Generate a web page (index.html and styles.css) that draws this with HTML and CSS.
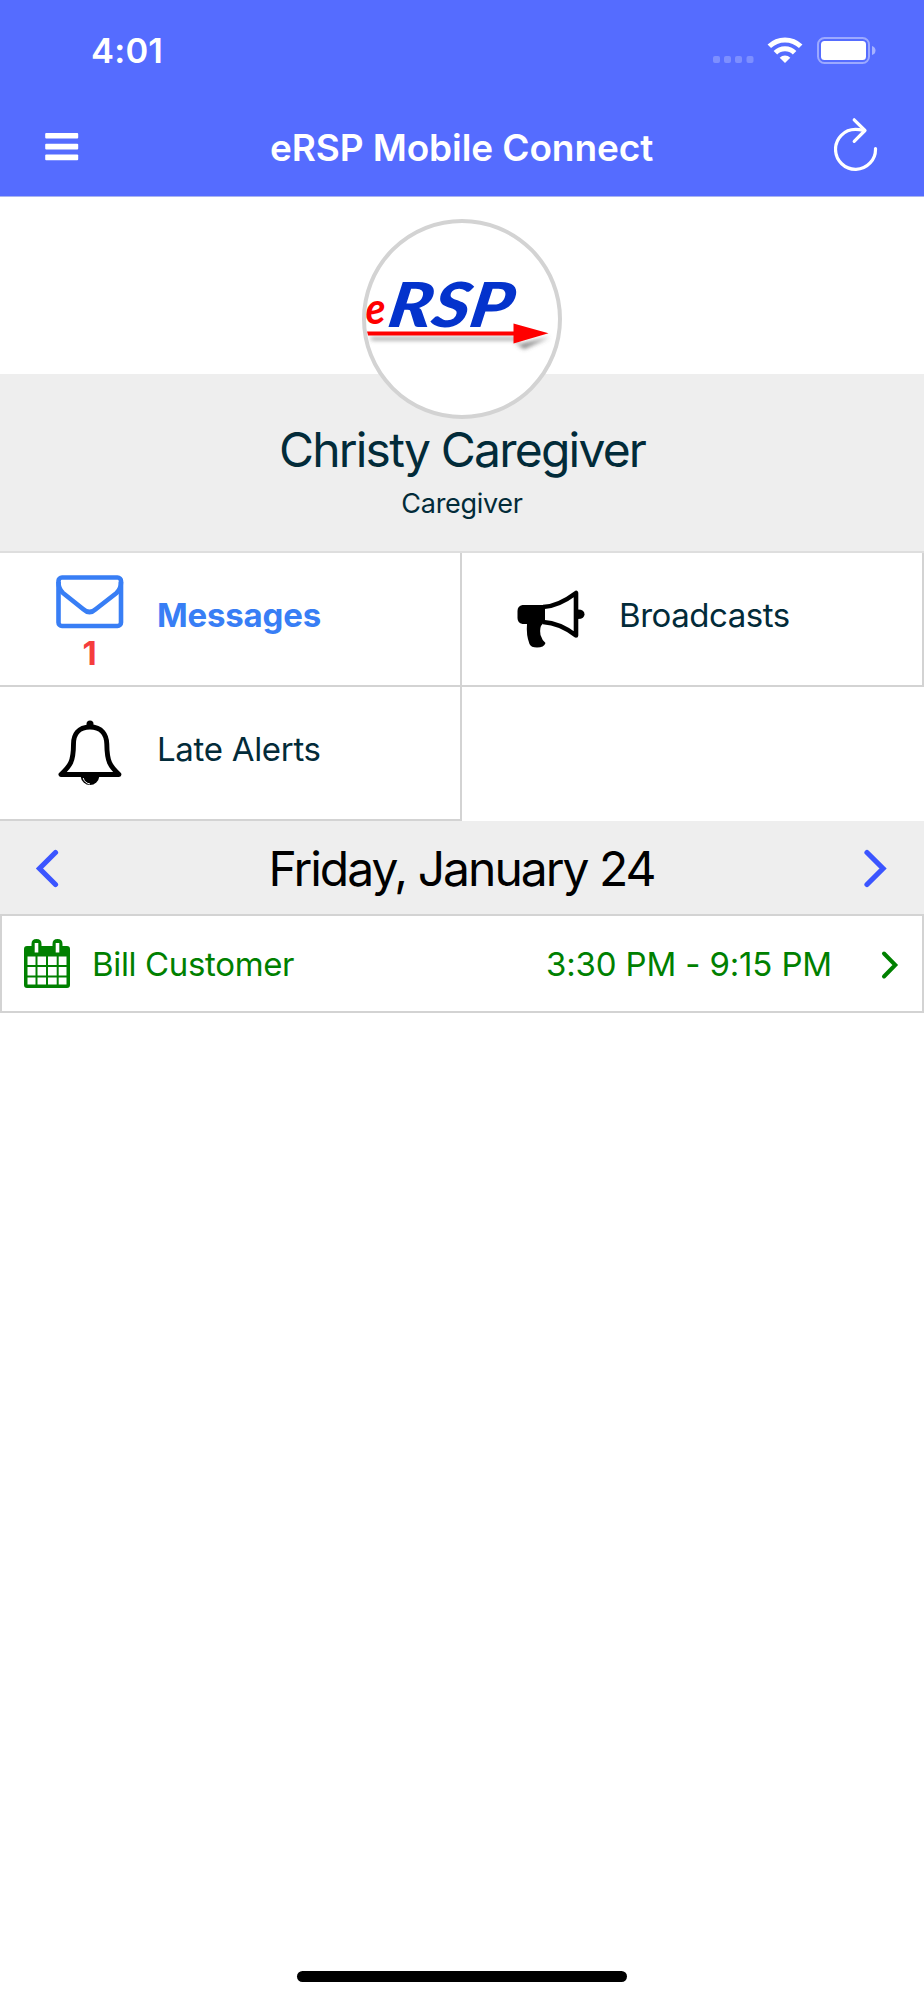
FILE: index.html
```html
<!DOCTYPE html>
<html lang="en">
<head>
<meta charset="utf-8">
<title>eRSP Mobile Connect</title>
<link rel="stylesheet" href="styles.css">
</head>
<body>
<div class="screen">
  <header class="header">
    <div class="status">
      <span class="clock">4:01</span>
      <svg class="status-icons" width="166" height="32" viewBox="0 0 166 32">
        <g fill="#fff" fill-opacity=".24">
          <rect x="1" y="21" width="7" height="7" rx="2"/>
          <rect x="12" y="21" width="7" height="7" rx="2"/>
          <rect x="23" y="21" width="7" height="7" rx="2"/>
          <rect x="34.500" y="21" width="7" height="7" rx="2"/>
        </g>
        <g fill="none" stroke="#fff" stroke-width="5">
          <path d="M57.300 11.300A22.500 22.500 0 0 1 88.700 11.300"/>
          <path d="M63.400 17.700A13.500 13.500 0 0 1 82.600 17.700"/>
        </g>
        <path d="M73 28l-5.300-5.200a7.500 7.500 0 0 1 10.600 0z" fill="#fff"/>
        <rect x="106" y="3" width="51" height="25" rx="6.500" fill="none" stroke="#fff" stroke-opacity=".42" stroke-width="2"/>
        <rect x="109" y="6" width="45" height="19" rx="3.500" fill="#fff"/>
        <path d="M160 11q3.500 1 3.500 4.500T160 20z" fill="#fff" fill-opacity=".48"/>
      </svg>
    </div>
    <div class="navbar">
      <svg class="menu-icon" width="34" height="28" viewBox="0 0 34 28" fill="#fff">
        <rect x=".2" y="0" width="33" height="5.600" rx="1"/>
        <rect x=".2" y="10.800" width="33" height="5.600" rx="1"/>
        <rect x=".2" y="21.600" width="33" height="5.600" rx="1"/>
      </svg>
      <h1 class="title">eRSP Mobile Connect</h1>
      <svg class="refresh-icon" width="44" height="54" viewBox="0 0 44 54" fill="none" stroke="#fff" stroke-width="3.200" stroke-linecap="round" stroke-linejoin="round">
        <path d="M41.500 31.500A20 20 0 1 1 21.500 12.300Q25 12.300 30 13.500"/>
        <path d="M20.200 2.800L31 13.500 20.200 24.300"/>
      </svg>
    </div>
  </header>

  <section class="profile">
    <div class="avatar">
      <svg width="192" height="192" viewBox="0 0 192 192">
        <defs><filter id="soft" x="-10%" y="-60%" width="120%" height="240%"><feGaussianBlur stdDeviation="2"/></filter></defs>
        <path d="M4 114.500H154L150 122 184 114 158 126 150 121V117H6z" fill="#555" fill-opacity=".7" filter="url(#soft)"/>
        <path d="M1 108.500H147.500V100.500L182.500 110.300 147.500 120.500V112.500H2z" fill="#f00"/>
        <text class="logo-e" x="-.5" y="101" textLength="20" lengthAdjust="spacingAndGlyphs">e</text>
        <text class="logo-rsp" transform="translate(20 104) skewX(-10)" x="0" y="0" textLength="124" lengthAdjust="spacingAndGlyphs">RSP</text>
      </svg>
    </div>
    <div class="name">Christy Caregiver</div>
    <div class="role">Caregiver</div>
  </section>

  <nav class="tiles">
    <div class="tile messages">
      <div class="icon-col">
        <svg width="68" height="54" viewBox="0 0 68 54" fill="none" stroke="#387ef5" stroke-width="4.600">
          <rect x="2.500" y="2.500" width="62.500" height="48.500" rx="3.500"/>
          <path d="M2.500 7Q2.500 14 7 18L27 34Q33.500 40 40 34L60.500 18Q65 14 65 7"/>
        </svg>
        <span class="badge">1</span>
      </div>
      <span class="label">Messages</span>
    </div>
    <div class="tile broadcasts">
      <div class="icon-col">
        <svg width="68" height="58" viewBox="0 0 68 58">
          <path d="M5.500 15H28V33.500H26Q22 37 23.500 45 25 50 28.500 53 27 57.500 20 57.500 14 57.500 12.500 54 9 45 10 34H5.500Q.5 33 .5 28V21Q.5 16 5.500 15z"/>
          <path d="M26 17Q41 16.500 59 3V45.500Q43 33 26 32" fill="none" stroke="#000" stroke-width="4.600" stroke-linejoin="round"/>
          <path d="M61 19.500Q67.500 19.500 67.500 24.200T61 29z"/>
        </svg>
      </div>
      <span class="label">Broadcasts</span>
    </div>
    <div class="tile late">
      <div class="icon-col">
        <svg width="64" height="68" viewBox="0 0 64 68">
          <path d="M32 7C20 7 15.500 15 15.500 24C15.500 42 12 46 3 54.500H61C52 46 49 42 48.800 24C48.500 15 44 7 32 7z" fill="none" stroke="#000" stroke-width="4.900" stroke-linejoin="round"/>
          <path d="M28.500 7V4a3.500 3.500 0 0 1 7 0V7z"/>
          <path d="M22.500 56A9.600 10.500 0 0 0 41.500 56z"/>
          <path d="M25.200 58Q26.500 63 32 64" fill="none" stroke="#fff" stroke-width="1"/>
        </svg>
      </div>
      <span class="label">Late Alerts</span>
    </div>
  </nav>

  <div class="datebar">
    <svg width="24" height="40" viewBox="0 0 24 40" fill="none" stroke="#3b55ff" stroke-width="5.200" stroke-linecap="round"><path d="M20.500 4.500L4.500 20.500 20.500 36.500" /></svg>
    <span class="date">Friday, January 24</span>
    <svg width="24" height="40" viewBox="0 0 24 40" fill="none" stroke="#3b55ff" stroke-width="5.200" stroke-linecap="round"><path d="M3 4.500L19 20.500 3 36.500" /></svg>
  </div>

  <div class="visit">
    <svg class="calendar" width="46" height="49" viewBox="0 0 46 49">
      <path d="M3 7H7.500V5Q7.500 0 12.500 0T17.500 5V7H28.500V5Q28.500 0 33.500 0T38.500 5V7H43Q46 7 46 10V46Q46 49 43 49H3Q0 49 0 46V10Q0 7 3 7z" fill="green"/>
      <rect x="10.700" y="4" width="3.600" height="9.500" fill="#fff"/>
      <rect x="31.700" y="4" width="3.600" height="9.500" fill="#fff"/>
      <path d="M3.500 17.500h8v8.500h-8zM13.500 17.500h8.500v8.500h-8.500zM24 17.500h8.700v8.500h-8.700zM34.700 17.500h7.800v8.500h-7.800zM3.500 28h8v8.500h-8zM13.500 28h8.500v8.500h-8.500zM24 28h8.700v8.500h-8.700zM34.700 28h7.800v8.500h-7.800zM3.500 38.500h8v7h-8zM13.500 38.500h8.500v7h-8.500zM24 38.500h8.700v7h-8.700zM34.700 38.500h7.800v7h-7.800z" fill="#fff"/>
    </svg>
    <span class="customer">Bill Customer</span>
    <span class="time">3:30 PM - 9:15 PM</span>
    <svg class="chevron" width="18" height="30" viewBox="0 0 18 30" fill="none" stroke="green" stroke-width="4" stroke-linecap="round"><path d="M3 3.500L14.300 15 3 26.500"/></svg>
  </div>

  <div class="home-indicator"></div>
</div>
</body>
</html>
```
FILE: styles.css
```css
* { box-sizing: border-box; }
body { margin: 0; background: #fff; font-family: Inter, "Liberation Sans", sans-serif; }
svg { display: block; flex: none; }
.screen { width: 924px; height: 2000px; display: flex; flex-direction: column; overflow: hidden; }

.header { height: 197px; background: #556cff; color: #fff; border-bottom: 1px solid #a9b4f0; flex: none; }
.status { height: 101px; display: flex; align-items: center; justify-content: space-between; padding: 0 46px 0 91px; }
.clock { font-size: 34.5px; font-weight: 600; letter-spacing: 0.2px; }
.navbar { height: 93px; display: flex; align-items: center; justify-content: space-between; padding: 0 46px 0 45px; }
.menu-icon { margin-bottom: 2px; }
.title { margin: 0 0 0 10px; font-size: 37px; font-weight: 600; line-height: 60px; letter-spacing: -0.1px; white-space: nowrap; }
.refresh-icon { margin-bottom: 8px; }

.profile { height: 356px; flex: none; display: flex; flex-direction: column; align-items: center; padding-top: 22px; background: linear-gradient(#fff 177px, #eee 177px); border-bottom: 2px solid #dedede; color: #022b39; }
.avatar { width: 200px; height: 200px; flex: none; border: 4px solid #d3d3d3; border-radius: 50%; overflow: hidden; background: #fff; }
.logo-e { font: italic 700 43px Lato, sans-serif; fill: #f00; }
.logo-rsp { font: italic 900 62px Lato, sans-serif; fill: #0433cc; }
.name { font-size: 48px; line-height: 62px; letter-spacing: -1.8px; white-space: nowrap; }
.role { font-size: 27px; line-height: 46px; letter-spacing: -0.3px; }

.tiles { display: grid; grid-template-columns: 462px 462px; grid-template-rows: 134px 134px; flex: none; }
.tile { display: flex; border-right: 2px solid #d3d3d3; border-bottom: 2px solid #d3d3d3; color: #022b39; }
.icon-col { width: 157px; padding-left: 22px; display: flex; flex-direction: column; align-items: center; flex: none; }
.messages .icon-col { padding-top: 22px; }
.broadcasts .icon-col { padding-top: 37px; padding-left: 21px; }
.late .icon-col { padding-top: 33px; }
.badge { font-size: 33px; line-height: 48px; font-weight: 700; color: #f53d3d; }
.label { font-size: 33px; line-height: 124px; letter-spacing: -0.3px; white-space: nowrap; }
.broadcasts .label { letter-spacing: -0.45px; }
.messages .label { color: #387ef5; font-weight: 700; letter-spacing: -0.2px; }

.datebar { height: 93px; flex: none; display: flex; align-items: center; justify-content: space-between; padding: 1px 36px 0 35px; background: #eee; }
.date { font-size: 48px; color: #000; letter-spacing: -2px; white-space: nowrap; }

.visit { height: 99px; flex: none; display: flex; align-items: center; border: 2px solid #d3d3d3; color: green; font-size: 33px; padding: 0 23px 0 22px; }
.customer { margin-left: 22px; letter-spacing: -0.35px; white-space: nowrap; }
.time { margin-left: auto; letter-spacing: -0.15px; white-space: nowrap; }
.chevron { margin: 2px 0 0 49px; }

.home-indicator { width: 330px; height: 11px; border-radius: 6px; background: #000; margin: auto auto 18px; }
```
